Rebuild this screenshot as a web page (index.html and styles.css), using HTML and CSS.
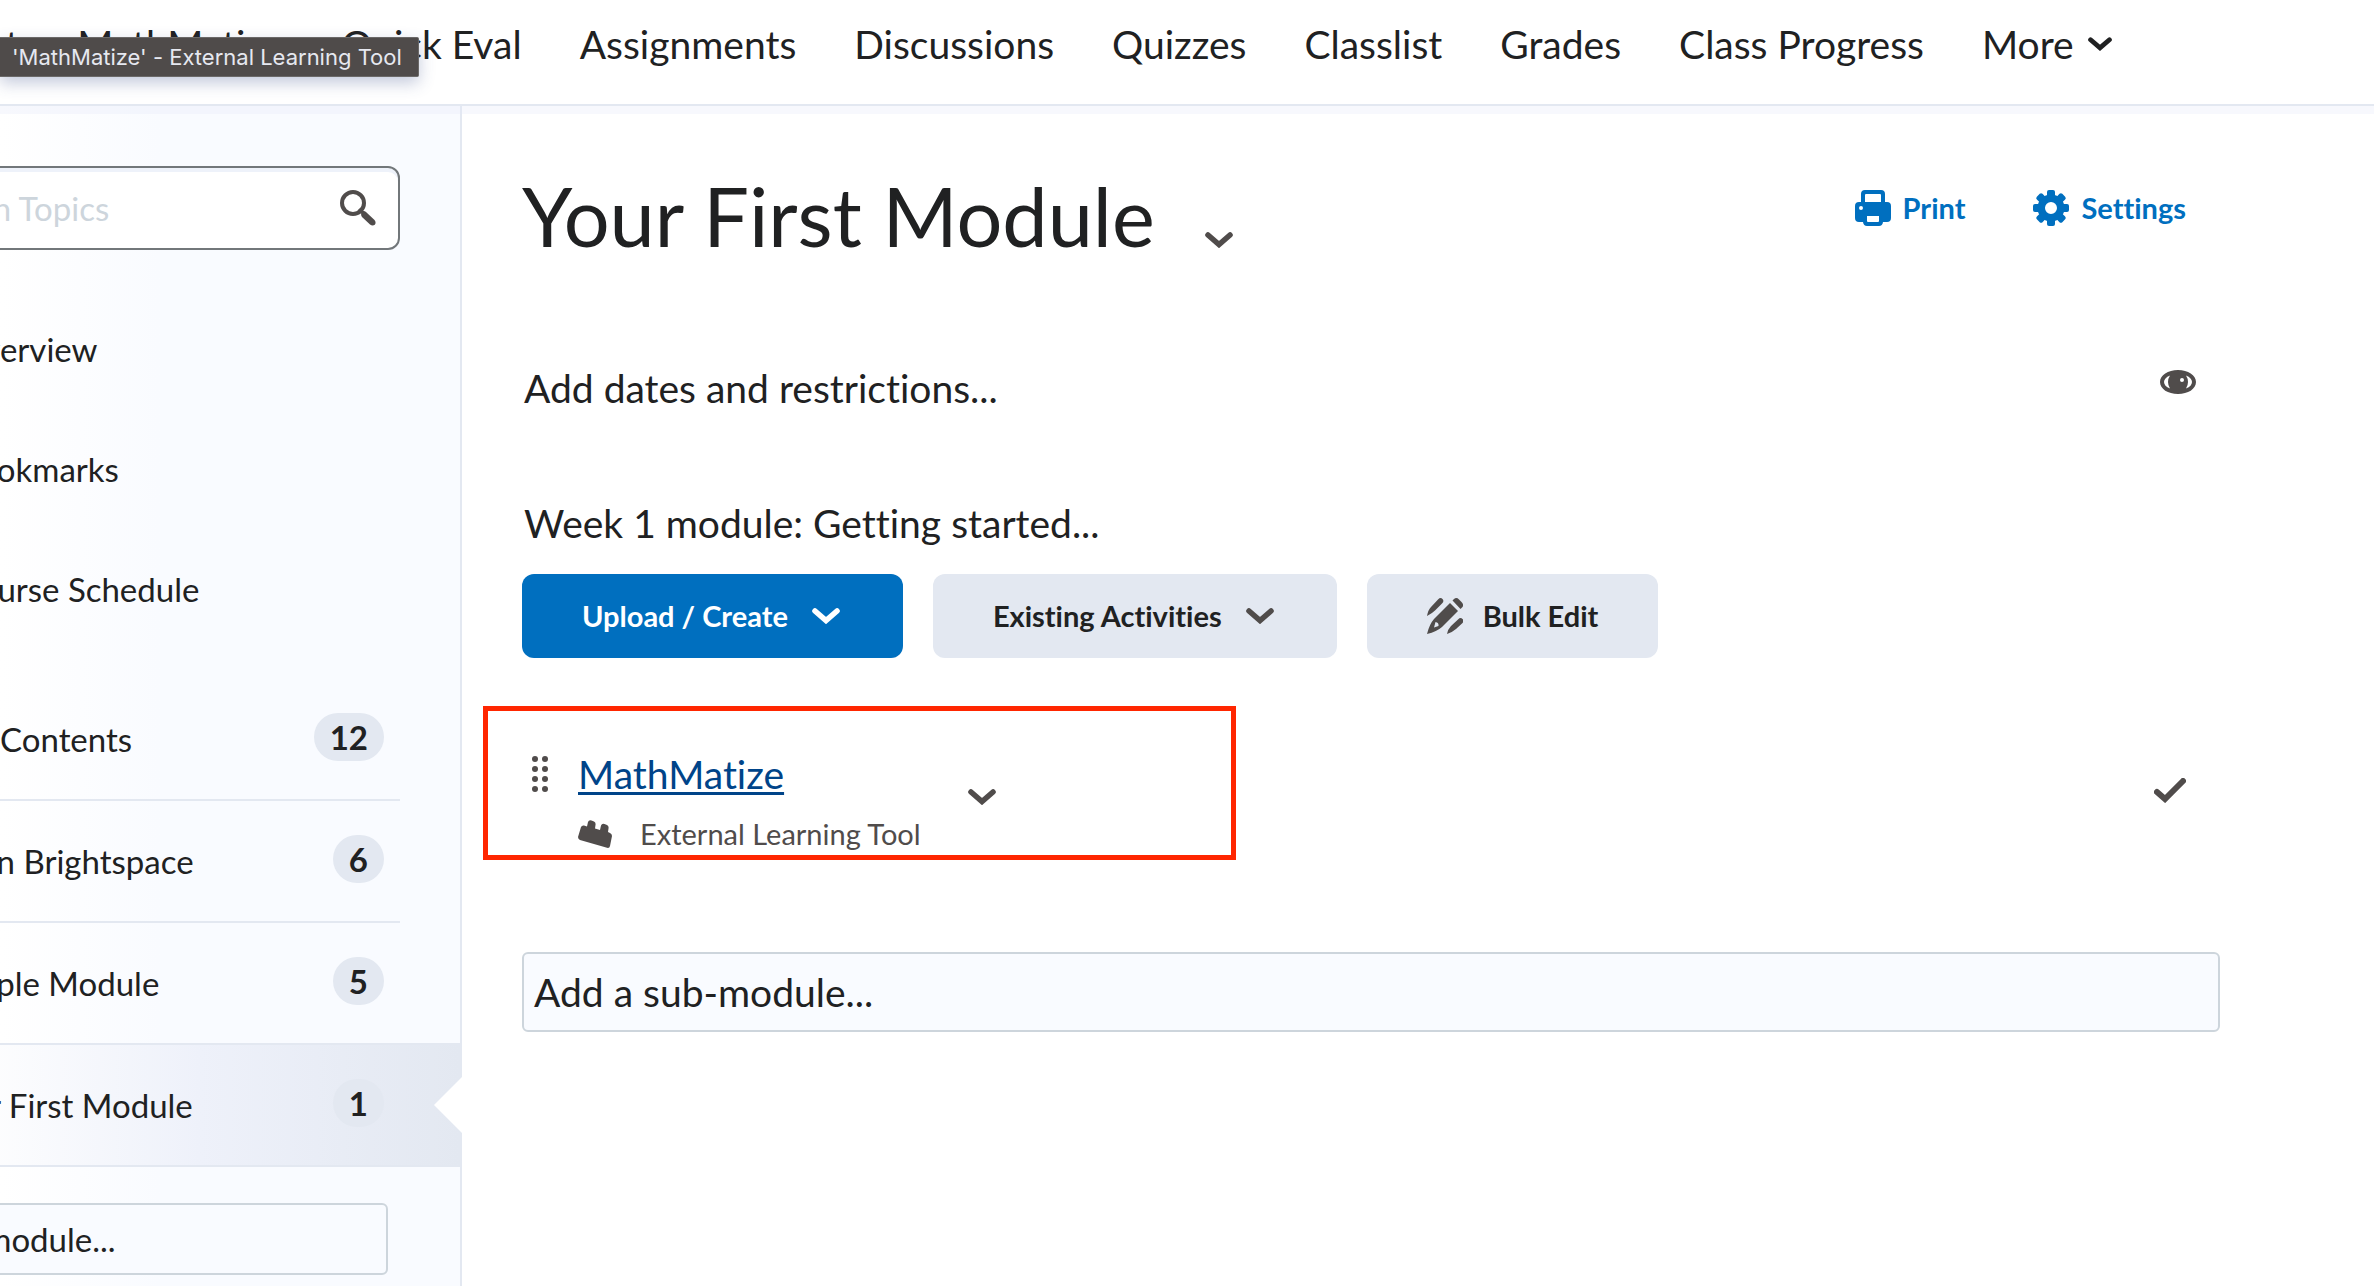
FILE: index.html
```
<!DOCTYPE html>
<html lang="en">
<head>
    <meta charset="UTF-8">
    <meta name="viewport" content="width=device-width, initial-scale=1.0">
    <title>Your First Module</title>
    <link rel="stylesheet" href="styles.css">
</head>
<body>
    <!-- Shared icons -->
    <svg class="icon-defs" aria-hidden="true">
        <symbol id="chevron" viewBox="0 0 28 16">
            <path d="M3 3 L14 12.5 L25 3" fill="none" stroke="currentColor" stroke-width="5.6" stroke-linecap="round" stroke-linejoin="miter"/>
        </symbol>
    </svg>

    <div class="page">
        <header class="navbar">
            <nav class="nav-links">
                <a href="#">Content</a>
                <a href="#">MathMatize</a>
                <a href="#">Quick Eval</a>
                <a href="#">Assignments</a>
                <a href="#">Discussions</a>
                <a href="#">Quizzes</a>
                <a href="#">Classlist</a>
                <a href="#">Grades</a>
                <a href="#">Class Progress</a>
                <button class="nav-more">More <svg class="chevron-small"><use href="#chevron"/></svg></button>
            </nav>
            <div class="tooltip" role="tooltip">'MathMatize' - External Learning Tool</div>
        </header>

        <div class="layout">
            <aside class="sidebar">
                <form class="search">
                    <input type="search" placeholder="Search Topics" aria-label="Search Topics">
                    <button type="button" aria-label="Search">
                        <svg class="icon" viewBox="0 0 36 36">
                            <circle cx="13" cy="13" r="11" fill="none" stroke="currentColor" stroke-width="4"/>
                            <path d="M21.5 22.5 L23 21 Q24.500 20.500 26 22 L34.500 30 Q36.500 32.500 34.800 34.800 Q32.500 36.500 30 34.500 L22 27 Q20.500 25 21.500 22.500 Z" fill="currentColor"/>
                            <path d="M19 19 L24 24" stroke="currentColor" stroke-width="3"/>
                        </svg>
                    </button>
                </form>

                <ul class="shortcuts">
                    <li><a href="#">Overview</a></li>
                    <li><a href="#">Bookmarks</a></li>
                    <li><a href="#">Course Schedule</a></li>
                </ul>

                <ul class="modules">
                    <li class="toc"><a href="#">Table of Contents</a><span class="badge">12</span></li>
                    <li><a href="#">Learn Brightspace</a><span class="badge">6</span></li>
                    <li><a href="#">Sample Module</a><span class="badge">5</span></li>
                    <li class="selected"><a href="#">Your First Module</a><span class="badge">1</span></li>
                </ul>

                <button class="add-box add-module">Add a module...</button>
            </aside>

            <main class="content">
                <div class="title-row">
                    <h1>Your First Module</h1>
                    <button class="title-menu" aria-label="Module actions"><svg class="chevron"><use href="#chevron"/></svg></button>
                    <div class="actions">
                        <button>
                            <svg class="icon" viewBox="0 0 36 36">
                                <path fill="currentColor" fill-rule="evenodd" d="M10 0 H26 Q30 0 30 4 V12 H32 Q36 12 36 16 V28 Q36 32 32 32 H28 Q27.500 36 24 36 H12 Q8.500 36 8 32 H4 Q0 32 0 28 V16 Q0 12 4 12 H6 V4 Q6 0 10 0 Z M11 4 Q10 4 10 5 V12 H26 V5 Q26 4 25 4 Z M12 26 V31 Q12 32 13 32 H23 Q24 32 24 31 V26 Z M6 16 A2 2 0 1 0 6 20 A2 2 0 1 0 6 16 Z"/>
                            </svg>
                            Print
                        </button>
                        <button>
                            <svg class="icon" viewBox="0 0 36 36">
                                <g fill="currentColor">
                                    <path fill-rule="evenodd" d="M18 4.500 A13.500 13.500 0 1 0 18 31.500 A13.500 13.500 0 1 0 18 4.500 Z M18 12 A6 6 0 1 1 18 24 A6 6 0 1 1 18 12 Z"/>
                                    <rect x="14" y="0" width="8" height="9" rx="2"/>
                                    <rect x="14" y="27" width="8" height="9" rx="2"/>
                                    <rect x="0" y="14" width="9" height="8" rx="2"/>
                                    <rect x="27" y="14" width="9" height="8" rx="2"/>
                                    <g transform="rotate(45 18 18)">
                                        <rect x="14" y="0" width="8" height="9" rx="2"/>
                                        <rect x="14" y="27" width="8" height="9" rx="2"/>
                                        <rect x="0" y="14" width="9" height="8" rx="2"/>
                                        <rect x="27" y="14" width="9" height="8" rx="2"/>
                                    </g>
                                </g>
                            </svg>
                            Settings
                        </button>
                    </div>
                </div>

                <div class="dates-row">
                    <button class="text-btn">Add dates and restrictions...</button>
                    <button class="icon-btn" aria-label="Visible">
                        <svg class="eye" viewBox="0 0 36 24">
                            <path fill="currentColor" fill-rule="evenodd" d="M18 0 C28 0 36 5 36 12 S28 24 18 24 S0 19 0 12 S8 0 18 0 Z M10 5.500 C6 7 4 9.500 4 12 S6 17 10 18.500 Q8 15.500 8 12 T10 5.500 Z M26 5.500 Q28 8.500 28 12 T26 18.500 C30 17 32 14.500 32 12 S30 7 26 5.500 Z M22 8 A2 2 0 1 0 22 12 A2 2 0 1 0 22 8 Z"/>
                        </svg>
                    </button>
                </div>

                <p class="description">Week 1 module: Getting started...</p>

                <div class="toolbar">
                    <button class="btn btn-primary">Upload / Create <svg class="chevron"><use href="#chevron"/></svg></button>
                    <button class="btn">Existing Activities <svg class="chevron"><use href="#chevron"/></svg></button>
                    <button class="btn btn-bulk">
                        <svg class="icon" viewBox="0 0 36 36">
                            <g fill="currentColor">
                                <path d="M0 18 Q1 12 4 9 L11 1.500 Q13.500 -1 15.500 1 T15 5.500 L8 12.500 Q5 15.500 0 18 Z"/>
                                <path d="M20 36 Q21 31 24 28 L31 21.500 Q33.500 19 35.500 21 T35 25.500 L29 31 Q25 34.500 20 36 Z"/>
                                <path d="M25.500 2.500 L27 1 Q29.500 -1 32 1.500 L34.500 4 Q37 6.500 35.500 9 L33.500 11 Z"/>
                                <path fill-rule="evenodd" d="M23 5 L31 13 L15 29 Q10 33.500 0 36 Q2.500 26 7 21 Z M8.500 24 L7 29.500 L11.500 28 Q12 24.500 8.500 24 Z"/>
                            </g>
                        </svg>
                        Bulk Edit
                    </button>
                </div>

                <div class="topic">
                    <svg class="handle" viewBox="0 0 16 36">
                        <g fill="currentColor">
                            <circle cx="3" cy="3" r="3"/><circle cx="13" cy="3" r="3"/>
                            <circle cx="3" cy="13" r="3"/><circle cx="13" cy="13" r="3"/>
                            <circle cx="3" cy="23" r="3"/><circle cx="13" cy="23" r="3"/>
                            <circle cx="3" cy="33" r="3"/><circle cx="13" cy="33" r="3"/>
                        </g>
                    </svg>
                    <div class="topic-body">
                        <a href="#">MathMatize</a>
                        <div class="topic-type">
                            <svg class="brick" viewBox="0 0 34 28">
                                <path fill="currentColor" d="M3 7 Q4 5 6 5.500 L9 6.500 L10 2 Q11 -0.500 13.500 0.500 L16 1.500 Q18 2.500 17.500 5 L17 8.500 L22 10 L23 5.500 Q24 3 26.500 4 L29 5 Q31 6 30.500 8.500 L30 12 L32 13 Q34 14 34 16 L32 26 Q31.500 28.500 29 27.800 L2 20 Q0 19 0 17 Z"/>
                            </svg>
                            External Learning Tool
                        </div>
                    </div>
                    <button class="topic-menu" aria-label="MathMatize actions"><svg class="chevron"><use href="#chevron"/></svg></button>
                    <svg class="check" viewBox="0 0 32 25">
                        <path d="M3 14 L11 21 L29 3" fill="none" stroke="currentColor" stroke-width="6" stroke-linecap="round"/>
                    </svg>
                    <div class="highlight"></div>
                </div>

                <button class="add-box add-submodule">Add a sub-module...</button>
            </main>
        </div>
    </div>
</body>
</html>
```

FILE: styles.css
```
* {
    box-sizing: border-box;
}
body {
    margin: 0;
    font-family: Lato, sans-serif;
    font-size: 39px;
    line-height: 48px;
    font-variant-ligatures: none;
    color: #202122;
    background: #fff;
    overflow: hidden;
}
a {
    color: inherit;
    text-decoration: none;
}
button {
    font: inherit;
    font-variant-ligatures: none;
    color: inherit;
    background: none;
    border: 0;
    padding: 0;
    text-align: left;
    cursor: pointer;
}
ul {
    list-style: none;
    margin: 0;
    padding: 0;
}
svg {
    display: block;
    flex: none;
}
.icon-defs {
    position: absolute;
    width: 0;
    height: 0;
}
.icon {
    width: 36px;
    height: 36px;
}
.chevron {
    width: 28px;
    height: 16px;
    color: #504c4b;
}
.chevron-small {
    width: 24px;
    height: 14px;
}

/* The left part of the page is scrolled out of view */
.page {
    margin-left: -160px;
    min-height: 100vh;
    display: flex;
    flex-direction: column;
}

/* Navigation */
.navbar {
    position: relative;
    z-index: 1;
    padding: 20px 0 36px 40px;
    background: #fff;
    border-bottom: 2px solid #e3e8f1;
    box-shadow: 0 8px 0 rgba(227, 232, 250, 0.3);
}
.nav-links {
    display: flex;
    gap: 58px;
    white-space: nowrap;
}
.nav-more {
    display: flex;
    align-items: center;
    gap: 14px;
}
.tooltip {
    position: absolute;
    top: 37px;
    left: 160px;
    padding: 4px 16px 4px 12px;
    font-family: Inter, sans-serif;
    font-size: 22px;
    line-height: 30px;
    white-space: nowrap;
    color: #e6e8f0;
    background: #4f4b4a;
    border: 1px solid #6b6968;
    border-left: 0;
    border-radius: 0 2px 2px 0;
    box-shadow: 0 6px 16px rgba(60, 80, 140, 0.3);
}
.layout {
    flex: 1;
    display: flex;
}

/* Sidebar */
.sidebar {
    flex: none;
    width: 622px;
    padding-top: 60px;
    font-size: 33px;
    line-height: 40px;
    background: linear-gradient(to right, #fff 160px, #f9fbff 320px);
    border-right: 2px solid #e3e8f1;
}
.search {
    display: flex;
    align-items: center;
    height: 84px;
    margin-right: 60px;
    padding: 0 22px 0 72px;
    color: #504c4b;
    background: #fff;
    border: 2px solid #72777a;
    border-radius: 12px;
    box-shadow: inset 0 4px 0 #eef2fa;
}
.search input {
    flex: 1;
    min-width: 0;
    padding: 0;
    font: inherit;
    background: none;
    border: 0;
    outline: 0;
}
.search input::placeholder {
    color: #cdd5dc;
    opacity: 1;
}
.shortcuts {
    padding: 39px 0 30px 117px;
}
.shortcuts li {
    padding: 40px 0;
}
.modules li {
    position: relative;
    display: flex;
    align-items: center;
    justify-content: space-between;
    height: 122px;
    margin-right: 60px;
    padding: 0 16px 0 95px;
    border-bottom: 2px solid #e3e8f1;
}
.modules .toc {
    padding-left: 38px;
}
.modules .selected {
    margin: -2px 0 0;
    height: 124px;
    padding-right: 76px;
    background: linear-gradient(to right, #fff 120px, #eef1fa 360px, #e3e8f1);
    border-top: 2px solid #e3e8f1;
}
/* White notch pointing at the open module */
.modules .selected::after {
    content: "";
    position: absolute;
    top: 32px;
    right: -2px;
    width: 28px;
    height: 56px;
    background: #fff;
    clip-path: polygon(100% 0, 0 50%, 100% 100%);
}
.badge {
    min-width: 51px;
    height: 48px;
    margin-bottom: 4px;
    padding: 4px 16px;
    font-weight: 700;
    text-align: center;
    background: #e3e8f1;
    border-radius: 24px;
}
.add-box {
    display: block;
    background: #f9fbff;
    border: 2px solid #cdd5dc;
    border-radius: 6px;
}
.add-module {
    width: 508px;
    height: 72px;
    margin: 36px 0 0 40px;
    padding-left: 10px;
}

/* Main content */
.content {
    flex: 1;
    padding: 62px 154px 0 60px;
}
.title-row {
    display: flex;
}
h1 {
    margin: 0;
    font-size: 81px;
    line-height: 96px;
    font-weight: 400;
}
.title-menu {
    align-self: flex-end;
    margin: 0 0 16px 50px;
}
.actions {
    display: flex;
    gap: 68px;
    height: 80px;
    margin-left: auto;
    padding-right: 34px;
    font-size: 29px;
    font-weight: 700;
    color: #006fbf;
}
.actions button {
    display: flex;
    align-items: center;
    gap: 12px;
}
.dates-row {
    display: flex;
    justify-content: space-between;
    margin-top: 100px;
    padding-right: 24px;
}
.icon-btn {
    height: 36px;
    color: #504c4b;
}
.eye {
    width: 36px;
    height: 24px;
}
.text-btn,
.description {
    padding-left: 2px;
}
.description {
    margin: 87px 0 27px;
}
.toolbar {
    display: flex;
    gap: 30px;
}
.btn {
    display: flex;
    align-items: center;
    gap: 24px;
    height: 84px;
    padding: 0 63px 0 60px;
    font-size: 29px;
    font-weight: 700;
    background: #e3e8f1;
    border-radius: 12px;
}
.btn-primary,
.btn-primary .chevron {
    color: #fff;
}
.btn-primary {
    background: #006fbf;
}
.btn-bulk {
    gap: 20px;
    padding-right: 60px;
}
.btn .icon {
    color: #504c4b;
}
.topic {
    position: relative;
    display: flex;
    margin-top: 48px;
    padding: 44px 34px 0 10px;
    color: #504c4b;
}
.handle {
    width: 16px;
    height: 36px;
    margin: 6px 30px 0 0;
}
.topic-body a {
    color: #004489;
    text-decoration: underline;
    text-decoration-thickness: 3px;
    text-underline-offset: 3px;
}
.topic-type {
    display: flex;
    align-items: center;
    gap: 28px;
    margin-top: 18px;
    font-size: 29px;
    line-height: 36px;
}
.brick {
    width: 34px;
    height: 28px;
}
.topic-menu {
    align-self: flex-start;
    margin: 39px 0 0 47px;
}
.check {
    width: 32px;
    height: 25px;
    margin: 28px 0 0 auto;
}
/* Red frame around the topic */
.highlight {
    position: absolute;
    top: 0;
    left: -39px;
    width: 753px;
    bottom: -8px;
    border: 5px solid #ff2600;
    pointer-events: none;
}
.add-submodule {
    width: 100%;
    height: 80px;
    margin-top: 100px;
    padding-left: 10px;
}
```
